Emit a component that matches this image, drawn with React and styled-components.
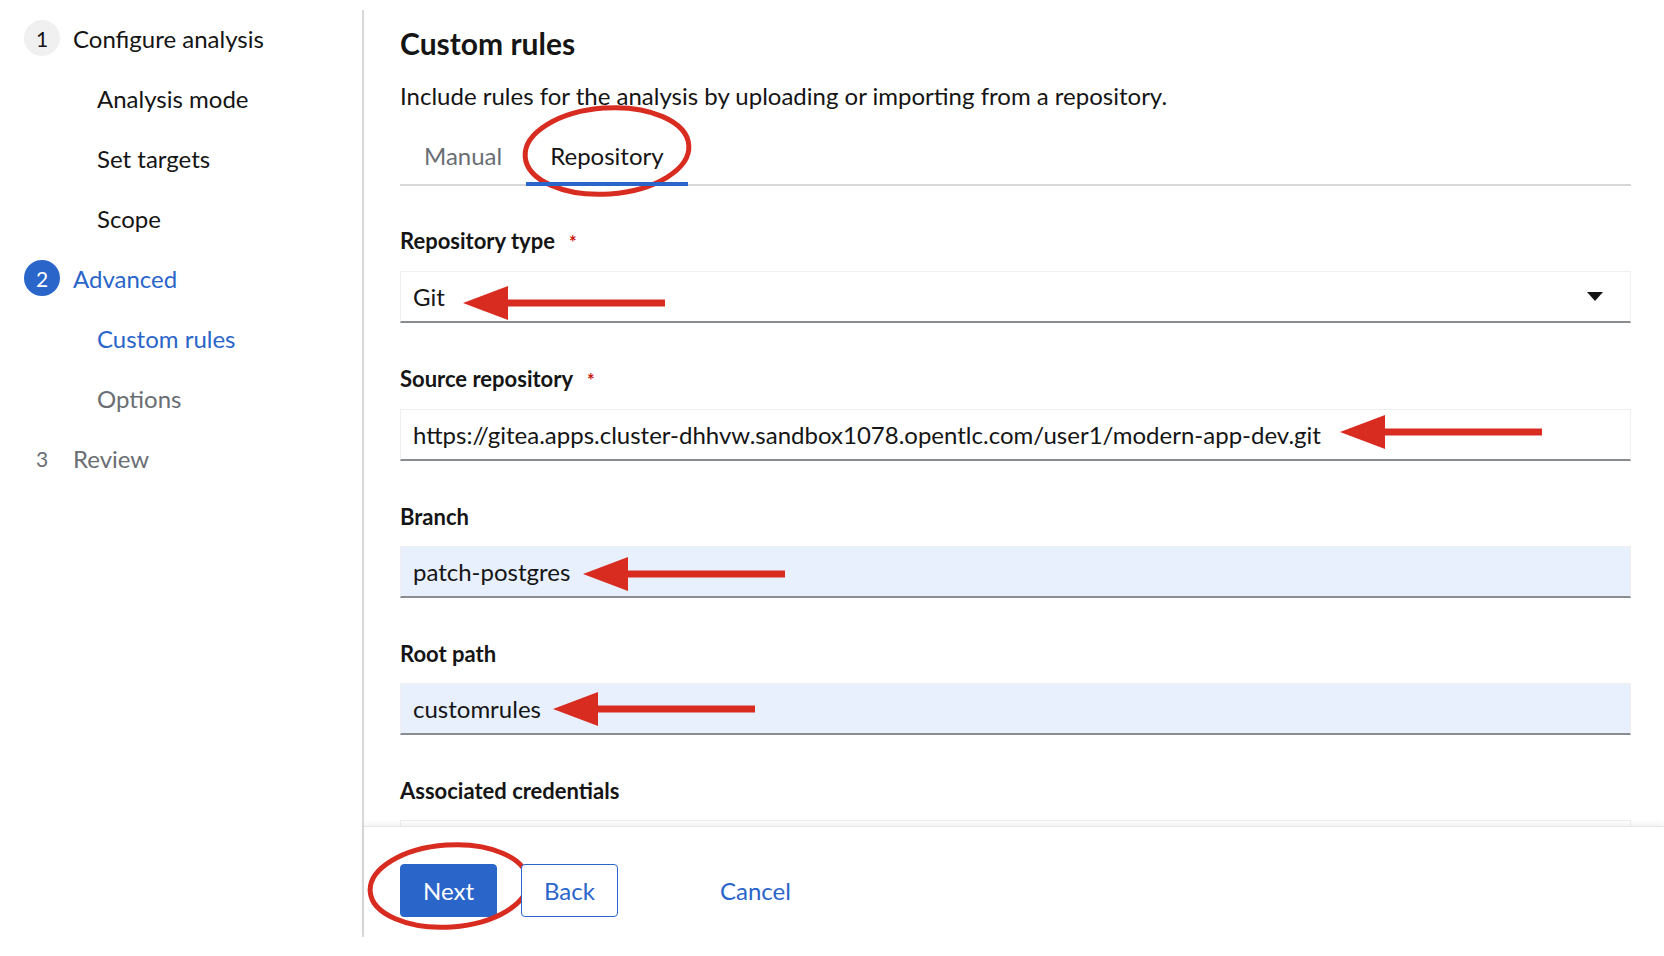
import styled, {createGlobalStyle} from 'styled-components';

const BLUE = '#2a65c9';
const RED = '#d82c20';

const GlobalStyle = createGlobalStyle`
  html, body {
    margin: 0;
    background: #fff;
  }
  body {
    font-family: Lato, 'Open Sans', sans-serif;
    color: #151515;
  }
`;

const Page = styled.div`
  display: flex;
  height: 956px;
  padding: 10px 0 19px;
  box-sizing: border-box;
  overflow: hidden;
`;

const Sidebar = styled.nav`
  width: 362px;
  flex-shrink: 0;
  border-right: 2px solid #d8d8d8;
`;

const NavList = styled.div`
  margin-top: -2px;
`;

const NavRow = styled.div`
  display: flex;
  align-items: center;
  height: 60px;
  padding-left: ${p => (p.$sub ? '97px' : '24px')};
  font-size: 24px;
  color: ${p => (p.$tone === 'current' ? BLUE : p.$tone === 'muted' ? '#6a6e73' : '#151515')};
`;

const StepNumber = styled.span`
  width: 36px;
  height: 36px;
  border-radius: 50%;
  margin-right: 13px;
  display: flex;
  align-items: center;
  justify-content: center;
  font-size: 21px;
  background: ${p => (p.$tone === 'current' ? BLUE : p.$tone === 'muted' ? 'transparent' : '#f0f0f0')};
  color: ${p => (p.$tone === 'current' ? '#fff' : p.$tone === 'muted' ? '#6a6e73' : '#151515')};
`;

const Main = styled.main`
  flex: 1;
  min-width: 0;
  display: flex;
  flex-direction: column;
`;

const Body = styled.div`
  flex: 1;
  overflow: hidden;
  padding: 14px 33px 0 36px;
`;

const Title = styled.h1`
  margin: 0;
  font-size: 30px;
  font-weight: 700;
  line-height: 39px;
`;

const Description = styled.p`
  margin: 16px 0 0;
  font-size: 24px;
  line-height: 34px;
`;

const Tabs = styled.div`
  display: flex;
  margin-top: 13px;
  border-bottom: 2px solid #d8d8d8;
`;

const Tab = styled.div`
  position: relative;
  height: 58px;
  padding: 0 24px;
  display: flex;
  align-items: center;
  font-size: 24px;
  color: ${p => (p.$active ? '#151515' : '#6a6e73')};
  &::after {
    content: '';
    position: absolute;
    left: 0;
    right: 0;
    bottom: -2px;
    height: 4px;
    background: ${p => (p.$active ? BLUE : 'transparent')};
  }
`;

const Circle = styled.svg`
  position: absolute;
  left: 50%;
  top: 50%;
  transform: translate(-50%, calc(-50% + ${p => p.$dy || 0}px)) rotate(-4deg);
  pointer-events: none;
`;

const Form = styled.div`
  margin-top: 41px;
  display: flex;
  flex-direction: column;
  gap: 42px;
`;

const Field = styled.div`
  display: flex;
  flex-direction: column;
  gap: 15px;
`;

const Label = styled.label`
  font-size: 22px;
  font-weight: 700;
  line-height: 28px;
`;

const Required = styled.span`
  color: #c9190b;
  margin-left: 14px;
  font-size: 18px;
`;

const Control = styled.div`
  height: 52px;
  box-sizing: border-box;
  display: flex;
  align-items: center;
  padding: 0 12px;
  border: 1px solid #efefef;
  border-bottom: 2px solid #8a8d90;
  background: ${p => (p.$filled ? '#e8f0fe' : '#fff')};
  font-size: 24px;
  white-space: nowrap;
`;

const ArrowSvg = styled.svg`
  flex-shrink: 0;
  margin-left: ${p => p.$gap}px;
  transform: translateY(${p => p.$dy}px);
`;

const Caret = styled.svg`
  margin-left: auto;
  margin-right: 15px;
`;

const Footer = styled.footer`
  flex-shrink: 0;
  height: 111px;
  box-sizing: border-box;
  padding: 37px 36px 0;
  display: flex;
  align-items: flex-start;
  gap: 24px;
  border-top: 1px solid #e6e6e6;
  box-shadow: 0 -3px 5px rgba(0, 0, 0, 0.05);
  position: relative;
`;

const Button = styled.button`
  position: relative;
  height: 53px;
  padding: 0 22px;
  border-radius: 4px;
  font-family: inherit;
  font-size: 24px;
  cursor: pointer;
  border: 1px solid ${p => (p.$variant === 'link' ? 'transparent' : BLUE)};
  background: ${p => (p.$variant === 'primary' ? BLUE : '#fff')};
  color: ${p => (p.$variant === 'primary' ? '#fff' : BLUE)};
  margin-left: ${p => (p.$variant === 'link' ? '55px' : '0')};
`;

function Arrow({gap, dy = 0}) {
  return (
    <ArrowSvg $gap={gap} $dy={dy} width="202" height="34" viewBox="0 0 202 34">
      <polygon points="0,17 45,0 45,34" fill={RED} />
      <rect x="44" y="13.5" width="158" height="7" fill={RED} />
    </ArrowSvg>
  );
}

function Ellipse({w, h, dy}) {
  return (
    <Circle $dy={dy} width={w} height={h} viewBox={`0 0 ${w} ${h}`}>
      <ellipse cx={w / 2} cy={h / 2} rx={w / 2 - 4} ry={h / 2 - 4} fill="none" stroke={RED} strokeWidth="5" />
    </Circle>
  );
}

const navItems = [
  {num: '1', label: 'Configure analysis'},
  {label: 'Analysis mode'},
  {label: 'Set targets'},
  {label: 'Scope'},
  {num: '2', label: 'Advanced', tone: 'current'},
  {label: 'Custom rules', tone: 'current'},
  {label: 'Options', tone: 'muted'},
  {num: '3', label: 'Review', tone: 'muted'},
];

export default function App() {
  return (
    <Page>
      <GlobalStyle />
      <Sidebar>
        <NavList>
          {navItems.map(item => (
            <NavRow key={item.label} $sub={!item.num} $tone={item.tone}>
              {item.num && <StepNumber $tone={item.tone}>{item.num}</StepNumber>}
              {item.label}
            </NavRow>
          ))}
        </NavList>
      </Sidebar>

      <Main>
        <Body>
          <Title>Custom rules</Title>
          <Description>Include rules for the analysis by uploading or importing from a repository.</Description>

          <Tabs>
            <Tab>Manual</Tab>
            <Tab $active>
              Repository
              <Ellipse w={172} h={94} dy={-4} />
            </Tab>
          </Tabs>

          <Form>
            <Field>
              <Label>
                Repository type<Required>*</Required>
              </Label>
              <Control>
                Git
                <Arrow gap={18} dy={6} />
                <Caret width="16" height="9" viewBox="0 0 16 9">
                  <polygon points="0,0 16,0 8,9" fill="#151515" />
                </Caret>
              </Control>
            </Field>

            <Field>
              <Label>
                Source repository<Required>*</Required>
              </Label>
              <Control>
                https://gitea.apps.cluster-dhhvw.sandbox1078.opentlc.com/user1/modern-app-dev.git
                <Arrow gap={19} dy={-3} />
              </Control>
            </Field>

            <Field>
              <Label>Branch</Label>
              <Control $filled>
                patch-postgres
                <Arrow gap={13} dy={2} />
              </Control>
            </Field>

            <Field>
              <Label>Root path</Label>
              <Control $filled>
                customrules
                <Arrow gap={12} />
              </Control>
            </Field>

            <Field>
              <Label>Associated credentials</Label>
              <Control />
            </Field>
          </Form>
        </Body>

        <Footer>
          <Button $variant="primary">
            Next
            <Ellipse w={166} h={90} dy={-5} />
          </Button>
          <Button $variant="secondary">Back</Button>
          <Button $variant="link">Cancel</Button>
        </Footer>
      </Main>
    </Page>
  );
}
